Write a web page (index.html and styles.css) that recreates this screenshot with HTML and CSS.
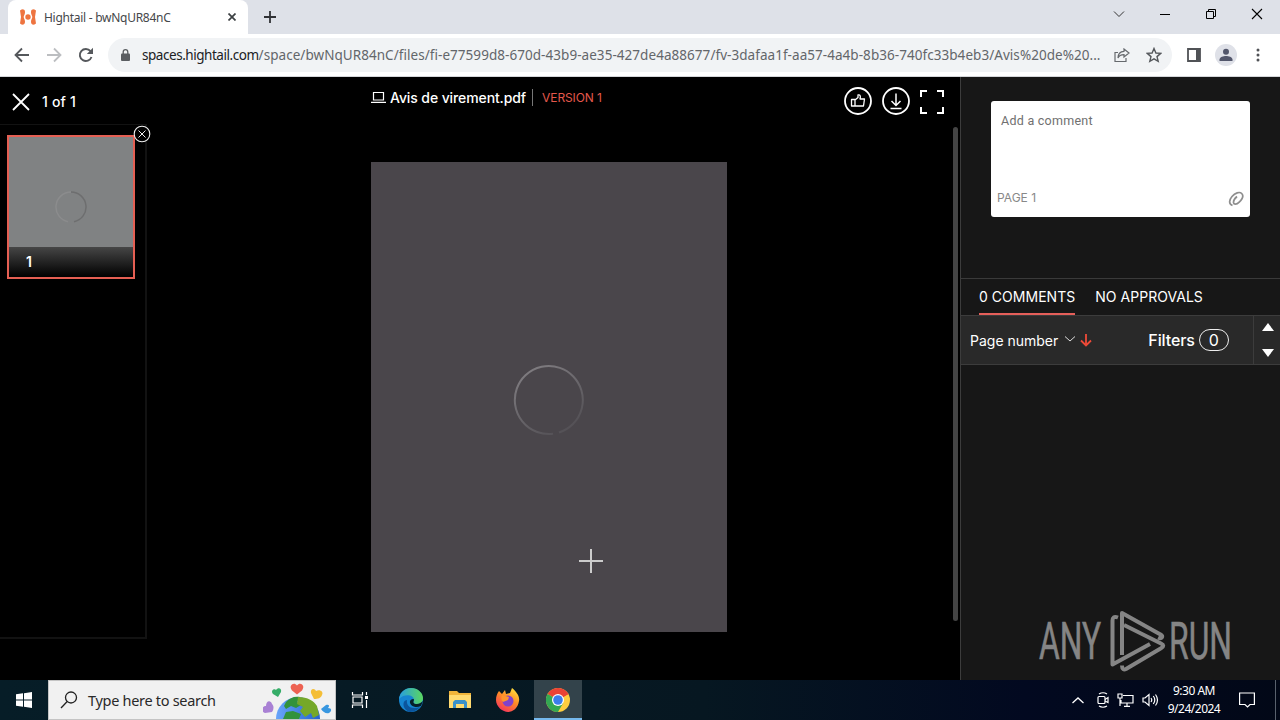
FILE: index.html
```html
<!DOCTYPE html>
<html lang="en">
<head>
    <meta charset="UTF-8">
    <meta name="viewport" content="width=device-width, initial-scale=1.0">
    <title>Hightail - bwNqUR84nC</title>
    <link rel="stylesheet" href="styles.css">
</head>
<body>
    <div class="desktop">
        <!-- Browser tabs -->
        <div class="tabstrip">
            <div class="tab">
                <svg class="favicon" width="16" height="16" viewBox="0 0 16 16" fill="#ee7440">
                    <path d="M0 1.500 2 .3C4.600.3 5 1.500 5 3.500 5 5.500 3.700 6.500 3.700 8S5 10.500 5 12.500 4.600 15.700 2 15.700L0 14.500 1 8z"/>
                    <path d="M16 1.500 14 .3C11.400.3 11 1.500 11 3.500 11 5.500 12.300 6.500 12.300 8S11 10.500 11 12.500 11.400 15.700 14 15.700L16 14.500 15 8z"/>
                    <circle cx="8" cy="8" r="2.700"/>
                </svg>
                <span class="tab-title">Hightail - bwNqUR84nC</span>
                <svg width="8" height="8" viewBox="0 0 8 8" stroke="#3c4043" stroke-width="1.700"><path d="M.5.5l7 7M7.500.5l-7 7"/></svg>
            </div>
            <svg class="new-tab" width="12" height="12" viewBox="0 0 12 12" stroke="#303236" stroke-width="1.800"><path d="M6 0v12M0 6h12"/></svg>
            <div class="window-buttons">
                <svg width="12" height="12" viewBox="0 0 12 12" fill="none" stroke="#333"><path d="M1 3.500l5 5 5-5"/></svg>
                <svg width="12" height="12" viewBox="0 0 12 12" fill="none" stroke="#000"><path d="M1 6.500h10"/></svg>
                <svg width="12" height="12" viewBox="0 0 12 12" fill="none" stroke="#000"><path d="M1.500 3.500h7v7h-7zM3.500 3.500v-2h7v7h-2"/></svg>
                <svg width="12" height="12" viewBox="0 0 12 12" fill="none" stroke="#000" stroke-width="1.100"><path d="M1 1l10 10M11 1L1 11"/></svg>
            </div>
        </div>

        <!-- Address bar -->
        <div class="toolbar">
            <div class="nav-buttons">
                <svg width="16" height="16" viewBox="0 0 16 16" fill="none" stroke="#55585c" stroke-width="1.800"><path d="M15 8H2M8 1.500L1.500 8 8 14.500"/></svg>
                <svg width="16" height="16" viewBox="0 0 16 16" fill="none" stroke="#bcbec1" stroke-width="1.800"><path d="M1 8h13M8 1.500L14.500 8 8 14.500"/></svg>
                <svg width="16" height="16" viewBox="0 0 16 16" fill="none" stroke="#55585c" stroke-width="1.900"><path d="M13.500 10A6 6 0 1 1 12.500 4.200"/><path d="M15 .8v6.200H8.800z" fill="#55585c" stroke="none"/></svg>
            </div>
            <div class="omnibox">
                <svg class="lock" width="9" height="12" viewBox="0 0 9 12"><rect y="4.500" width="9" height="7.500" rx="1" fill="#5a5d61"/><path d="M2.200 5V3a2.300 2.300 0 0 1 4.600 0v2" fill="none" stroke="#5a5d61" stroke-width="1.300"/></svg>
                <span class="url"><b>spaces.hightail.com</b><i>/space/bwNqUR84nC/files/fi-e77599d8-670d-43b9-ae35-427de4a88677/fv-3dafaa1f-aa57-4a4b-8b36-740fc33b4eb3/Avis%20de%20...</i></span>
                <svg class="share" width="16" height="14" viewBox="0 0 16 14" fill="none" stroke="#66696d" stroke-width="1.200"><path d="M4 4.500H1v9h11V10"/><path d="M10 1l5 4-5 4V6.700C7 6.700 5 7.500 4 10c0-4 2-6.500 6-6.700z"/></svg>
                <svg class="star" width="16" height="16" viewBox="0 0 16 16" fill="none" stroke="#55585c" stroke-width="1.400"><path d="M8 1.500l1.900 4.500 4.800.4L11 9.600l1.200 4.700L8 11.800l-4.200 2.500L5 9.600 1.300 6.400 6.100 6z"/></svg>
            </div>
            <svg class="side-icon" width="14" height="14" viewBox="0 0 14 14"><path d="M1 1h12v12H1z" fill="none" stroke="#505256" stroke-width="1.800"/><path d="M9 1h4v12H9z" fill="#505256"/></svg>
            <div class="avatar"><svg width="14" height="14" viewBox="0 0 14 14" fill="#52566b"><circle cx="7" cy="3.800" r="3"/><path d="M.5 13v-1.500C.5 9 4.500 8 7 8s6.500 1 6.500 3.500V13z"/></svg></div>
            <svg width="4" height="14" viewBox="0 0 4 14" fill="#505256"><circle cx="2" cy="2" r="1.500"/><circle cx="2" cy="7" r="1.500"/><circle cx="2" cy="12" r="1.500"/></svg>
        </div>

        <div class="app">
            <div class="viewer">
                <div class="pages-column">
                    <div class="pages-header">
                        <svg width="18" height="18" viewBox="0 0 18 18" stroke="#fff" stroke-width="1.800"><path d="M1 1l16 16M17 1L1 17"/></svg>
                        <span>1 of 1</span>
                    </div>
                    <div class="pages-panel">
                        <div class="thumb">
                            <svg class="thumb-spinner" width="32" height="32" viewBox="0 0 32 32" fill="none"><path d="M16 1a15 15 0 0 0-3 29.700" stroke="#8b8c8d" stroke-width="1.500"/><path d="M16 1a15 15 0 0 1 3 29.700" stroke="#6d6e6f" stroke-width="1.500"/></svg>
                            <div class="thumb-label">1</div>
                        </div>
                        <svg class="panel-close" width="18" height="18" viewBox="0 0 18 18" fill="none" stroke="#eee"><circle cx="9" cy="9" r="7.800" fill="#000" stroke-width="1.100"/><path d="M5.500 5.500l7 7M12.500 5.500l-7 7"/></svg>
                    </div>
                </div>
                <div class="document">
                    <div class="doc-header">
                        <svg width="15" height="11" viewBox="0 0 15 11" fill="none" stroke="#fff"><path d="M2.500.5h10v7.500h-10zM0 10.300h15" stroke-width="1.200"/></svg>
                        <span class="file-name">Avis de virement.pdf</span>
                        <span class="version">VERSION 1</span>
                        <div class="doc-actions">
                            <svg width="28" height="28" viewBox="0 0 28 28" fill="none" stroke="#fff"><circle cx="14" cy="14" r="13" stroke-width="1.800"/><path d="M7.500 12.500h3.500v6.500H7.500zM11 13l3-2.500V8c2.500-.5 2.800 1.500 2 4h4.500l-1 7H11" stroke-width="1.300" stroke-linejoin="round"/></svg>
                            <svg width="28" height="28" viewBox="0 0 28 28" fill="none" stroke="#fff"><circle cx="14" cy="14" r="13" stroke-width="1.800"/><path d="M14 6.500v12M9.500 14l4.500 4.500 4.500-4.500M8.500 21.500h11" stroke-width="1.500"/></svg>
                            <svg class="fullscreen" width="24" height="24" viewBox="0 0 24 24" fill="none" stroke="#fff" stroke-width="2"><path d="M1 7V1h6M17 1h6v6M23 17v6h-6M7 23H1v-6"/></svg>
                        </div>
                    </div>
                    <div class="page">
                        <svg class="spinner" width="72" height="72" viewBox="0 0 72 72" fill="none">
                            <defs><linearGradient id="fade" x1="0" y1="0" x2=".6" y2="1"><stop offset="0" stop-color="#858286"/><stop offset="1" stop-color="#555257"/></linearGradient></defs>
                            <path d="M46 68.500A34 34 0 1 0 40 69.800" stroke="url(#fade)" stroke-width="2"/>
                        </svg>
                    </div>
                    <svg class="crosshair" width="24" height="24" viewBox="0 0 24 24" stroke="#ccc" stroke-width="2"><path d="M12 0v24M0 12h24"/></svg>
                </div>
                <div class="scrollbar"></div>
            </div>

            <div class="sidebar">
                <div class="comment-area">
                    <div class="comment-box">
                        <span class="placeholder">Add a comment</span>
                        <div class="comment-footer">
                            <span>PAGE 1</span>
                            <svg width="16" height="16" viewBox="0 0 16 16" fill="none" stroke="#8e8e8e" stroke-width="1.700"><path d="M4.500 14.500C.5 13 1 9 4 5.500S11.500.3 13.700 2.500s.2 6-2.500 8.700-5.500 2.300-5.700.5 1.500-4.500 3.500-6.200"/></svg>
                        </div>
                    </div>
                </div>
                <div class="side-tabs">
                    <div class="side-tab active">0 COMMENTS</div>
                    <div class="side-tab">NO APPROVALS</div>
                </div>
                <div class="filter-bar">
                    <span class="sort">Page number</span>
                    <svg class="sort-caret" width="10" height="6" viewBox="0 0 10 6" fill="none" stroke="#ddd"><path d="M0 .5l5 4.500 5-4.500"/></svg>
                    <svg class="sort-arrow" width="12" height="13" viewBox="0 0 12 13" fill="none" stroke="#ee4a38" stroke-width="1.800"><path d="M6 0v11.500M1 6.500l5 5 5-5"/></svg>
                    <span class="filters">Filters</span>
                    <span class="filter-count">0</span>
                    <div class="steppers">
                        <svg width="12" height="8" viewBox="0 0 12 8" fill="#fff"><path d="M6 0l6 8H0z"/></svg>
                        <svg width="12" height="8" viewBox="0 0 12 8" fill="#fff"><path d="M6 8l6-8H0z"/></svg>
                    </div>
                </div>
                <svg class="watermark" width="210" height="66" viewBox="0 0 210 66">
                    <g class="watermark-text">
                        <text x="3" y="51" textLength="62" lengthAdjust="spacingAndGlyphs">ANY</text>
                        <text x="133" y="51" textLength="63" lengthAdjust="spacingAndGlyphs">RUN</text>
                    </g>
                    <g fill="none" stroke="#858585" stroke-width="4" stroke-linejoin="round">
                        <path d="M82 9.500c-4-1.500-5.500 0-5.500 3v44L114 36"/>
                        <path d="M86 47V5l38.500 21.500c3 2 1.500 5-2.500 3.200"/>
                        <path d="M88 17l37 18.500c3 1.500 3 3 0 4.700L90 61c-2 1-4 .5-4-3.500"/>
                    </g>
                </svg>
            </div>
        </div>

        <!-- Taskbar -->
        <div class="taskbar">
            <div class="start"><svg width="16" height="16" viewBox="0 0 16 16" fill="#fff"><path d="M0 2.300L7 1.300v6.200H0zM8 1.200L16 0v7.500H8zM0 8.500h7v6.200l-7-1zM8 8.500h8V16l-8-1.200z"/></svg></div>
            <div class="search">
                <svg width="18" height="18" viewBox="0 0 18 18" fill="none" stroke="#222" stroke-width="1.300"><circle cx="11" cy="6.500" r="5.500"/><path d="M7.200 10.500L1 17"/></svg>
                <span>Type here to search</span>
                <svg class="earth" width="72" height="38" viewBox="0 0 72 38">
                    <defs><linearGradient id="sea" x1="0" x2="1"><stop offset="0" stop-color="#69a5fa"/><stop offset="1" stop-color="#2463cf"/></linearGradient></defs>
                    <circle cx="35" cy="38" r="22" fill="url(#sea)"/>
                    <path d="M23 21c4-4 8-6 14-5l-3 5 4 3-5 3-5-2-5 3-2-3z" fill="#32923b"/>
                    <path d="M20 38l3-7 7-1 8 3-2 5z" fill="#32923b"/>
                    <path d="M35 16c10 0 16 4 19 9l2 9-6 3-2-5-6 4-5-6 3-4-6-3z" fill="#75a829"/>
                    <path d="M34 13.500l-5-4c-4-5 2-9 5-5 3-4 9 0 5 5z" fill="#ed6252"/>
                    <path d="M15 16l-5-3c-3-4 2-6 3-4 2-3 6-2 5 2z" fill="#36ad68"/>
                    <path d="M51 18l-3-6c-1-5 4-5 5-2 4-2 8 1 6 4-1 3-4 4-8 4z" fill="#f4be36"/>
                    <path d="M9 31l-7 1c-5-2-3-7 1-7 0-6 5-6 6-2 2 2 2 5 0 8z" fill="#a981d4"/>
                    <path d="M58 28l5-4c3-1 4 1 2 3 4 0 4 3 1 5-3 1-6-1-8-4z" fill="#3897e0"/>
                </svg>
            </div>
            <div class="task"><svg width="18" height="16" viewBox="0 0 18 16" fill="none" stroke="#fff" stroke-width="1.200"><path d="M1.500 0v3h10V0M1.500 16v-3h10v3M2 5h9v6H2zM15.500 0v3M15.500 8v8"/><path d="M14 4h3v3h-3z" fill="#fff" stroke="none"/></svg></div>
            <div class="task edge"><svg width="24" height="24" viewBox="0 0 24 24">
                <defs><linearGradient id="edge" x1="0" x2="1"><stop offset="0" stop-color="#279de0"/><stop offset="1" stop-color="#5bd75f"/></linearGradient></defs>
                <circle cx="12" cy="12" r="12" fill="#1685d1"/>
                <path d="M0 11C1 4 6 0 12 0c7 0 12 5 12 10 0 4-3 6-6 6-4 0-4-2-3-4C15 7 6 5 0 11z" fill="url(#edge)"/>
                <path d="M8 12c-1 6 4 10 13 7-3 4-7 5-11 5-7-3-7-12-2-12z" fill="#0b559d"/>
                <path d="M15 12c-1 2-1 4 3 4 2 0 4-1 6-3l-2 5c-6 3-12-1-11-5 1-2 4-3 4-1z" fill="#061f29"/>
            </svg></div>
            <div class="task explorer"><svg width="22" height="20" viewBox="0 0 22 20"><path d="M0 1h8l2 2h12v15H0z" fill="#f0b43a"/><path d="M0 5h22v13H0z" fill="#ffda70"/><path d="M4 18v-6l2-2h10l2 2v6h-3v-4H7v4z" fill="#3b91ca"/></svg></div>
            <div class="task firefox"><svg width="24" height="24" viewBox="0 0 24 24">
                <defs><linearGradient id="fox" x1=".8" y1="0" x2=".2" y2="1"><stop offset="0" stop-color="#ffe23d"/><stop offset=".45" stop-color="#ff8a26"/><stop offset="1" stop-color="#f42c62"/></linearGradient></defs>
                <path d="M3 3l3 3 3-4 1 4 4-1 2-5c5 4 8 9 7 13-1 7-6 11-11 11S0 19 0 12C0 8 1 6 3 3z" fill="url(#fox)"/>
                <circle cx="12" cy="13" r="5.500" fill="#8142cc"/><path d="M6 7l7 2-1 3-5 2c-2-2-2-4-1-7z" fill="#ff952c"/>
            </svg></div>
            <div class="task active"><svg width="24" height="24" viewBox="0 0 24 24"><circle cx="12" cy="12" r="12" fill="#ffcd40"/><path d="M12 12L1.600 6A12 12 0 0 1 22.400 6z" fill="#ea4335"/><path d="M12 12L1.600 6A12 12 0 0 0 12 24l5.200-9z" fill="#34a853"/><path d="M12 6h10.400L12 12z" fill="#ea4335"/><circle cx="12" cy="12" r="6" fill="#fff"/><circle cx="12" cy="12" r="4.800" fill="#3b7ded"/></svg></div>
            <div class="tray">
                <svg width="12" height="7" viewBox="0 0 12 7" fill="none" stroke="#fff" stroke-width="1.300"><path d="M.5 6L6 1l5.500 5"/></svg>
                <svg width="12" height="16" viewBox="0 0 12 16" fill="none" stroke="#fff" stroke-width="1.200"><rect x="1" y="4.500" width="7" height="7" rx="1"/><path d="M8 7.500l3-2v5L8 9M2 2q4-2.500 8 0M2 14q4 2.500 8 0"/></svg>
                <svg width="17" height="14" viewBox="0 0 17 14" fill="none" stroke="#fff" stroke-width="1.200"><path d="M6 2.500h10v7.500H4V7M10 10v3M7 13.300h6M1 1h4v4H1zM3 5v8"/></svg>
                <svg width="17" height="14" viewBox="0 0 17 14" fill="none" stroke="#fff" stroke-width="1.200"><path d="M1 5h2l4-3.500v11L3 9H1zM9 5q1.500 2 0 4M11.300 3q3 4 0 8M13.500 1.500q4 5.500 0 11"/></svg>
            </div>
            <div class="clock"><span>9:30 AM</span><span>9/24/2024</span></div>
            <svg class="notice" width="16" height="16" viewBox="0 0 16 16" fill="none" stroke="#fff" stroke-width="1.200"><path d="M.6 1h14.800v11.500H11L8.500 15 6 12.500H.6z"/></svg>
            <div class="show-desktop"></div>
        </div>
    </div>
</body>
</html>
```

FILE: styles.css
```css
* {
    box-sizing: border-box;
}
body {
    margin: 0;
    background: #000;
    font-family: Inter, sans-serif;
}
svg {
    display: block;
    flex: none;
}
.desktop {
    width: 1280px;
    height: 720px;
    display: flex;
    flex-direction: column;
    overflow: hidden;
}

/* Browser */
.tabstrip {
    height: 34px;
    display: flex;
    align-items: center;
    background: #dee1e8;
    font-family: "Noto Sans", sans-serif;
}
.tab {
    width: 240px;
    height: 34px;
    margin-left: 8px;
    padding: 0 12px;
    display: flex;
    align-items: center;
    background: #fff;
    border-radius: 8px 8px 0 0;
}
.tab-title {
    flex: 1;
    margin-left: 8px;
    font-size: 12px;
    letter-spacing: -0.27px;
    color: #45474a;
}
.new-tab {
    margin-left: 16px;
}
.window-buttons {
    margin-left: auto;
    margin-right: 17px;
    margin-bottom: 6px;
    display: flex;
    gap: 34px;
}
.toolbar {
    height: 43px;
    padding-right: 20px;
    display: flex;
    align-items: center;
    background: #fff;
    border-bottom: 1px solid #d5d7da;
}
.nav-buttons {
    display: flex;
    gap: 16px;
    margin-left: 14px;
}
.omnibox {
    width: 1064px;
    height: 34px;
    margin-left: 14px;
    padding: 0 10px 0 13px;
    display: flex;
    align-items: center;
    background: #f1f3f5;
    border-radius: 17px;
}
.url {
    width: 973px;
    margin-left: 12px;
    font-family: "Noto Sans", sans-serif;
    font-size: 13.5px;
    white-space: nowrap;
}
.url b {
    font-weight: 400;
    letter-spacing: -0.46px;
    color: #202124;
}
.url i {
    font-style: normal;
    letter-spacing: 0.05px;
    color: #63666a;
}
.share {
    margin-right: 16px;
}
.side-icon {
    margin-left: 15px;
}
.avatar {
    width: 22px;
    height: 22px;
    margin: 0 19px 0 14px;
    display: flex;
    align-items: center;
    justify-content: center;
    background: #dfe1e8;
    border-radius: 50%;
}

/* Viewer */
.app {
    height: 603px;
    display: flex;
}
.viewer {
    width: 960px;
    display: flex;
    background: #000;
    color: #fff;
}
.pages-column {
    width: 148px;
}
.pages-header {
    height: 47px;
    padding: 2px 0 0 12px;
    display: flex;
    align-items: center;
    gap: 12px;
    font-size: 14px;
    font-weight: 500;
    letter-spacing: 0.2px;
}
.pages-panel {
    position: relative;
    width: 147px;
    height: 515px;
    padding: 10px 0 0 7px;
    border: solid #121212;
    border-width: 1px 2px 2px 0;
}
.thumb {
    width: 128px;
    height: 144px;
    display: flex;
    flex-direction: column;
    align-items: center;
    background: #808283;
    border: 2px solid #e55f53;
}
.thumb-spinner {
    margin-top: 54px;
}
.thumb-label {
    width: 100%;
    height: 30px;
    margin-top: auto;
    padding-left: 17px;
    background: linear-gradient(#464646, #000);
    font-size: 14px;
    font-weight: 600;
    line-height: 30px;
}
.panel-close {
    position: absolute;
    top: -0.5px;
    right: -5.5px;
}
.document {
    position: relative;
    width: 805px;
    padding-left: 223px;
}
.doc-header {
    height: 48px;
    margin-bottom: 37px;
    display: flex;
    align-items: center;
}
.doc-header > svg,
.doc-header > span {
    margin-bottom: 7px;
}
.file-name {
    margin-left: 4px;
    padding-right: 6px;
    border-right: 1px solid #777;
    font-size: 14px;
    font-weight: 500;
    line-height: 17px;
    letter-spacing: -0.1px;
}
.version {
    margin-left: 9px;
    font-size: 12px;
    letter-spacing: -0.1px;
    color: #e3584c;
}
.doc-actions {
    display: flex;
    align-items: center;
    gap: 10px;
    margin: 0 9px 0 auto;
}
.fullscreen {
    margin-top: 2px;
}
.page {
    width: 356px;
    height: 470px;
    display: flex;
    align-items: center;
    justify-content: center;
    background: #4a464b;
}
.spinner {
    margin-top: 5px;
}
.crosshair {
    position: absolute;
    left: 431px;
    top: 472px;
}
.scrollbar {
    width: 5px;
    height: 494px;
    margin-top: 50px;
    background: #444;
    border-radius: 3px;
}

/* Comments */
.sidebar {
    position: relative;
    width: 320px;
    background: #171717;
    border-left: 1px solid #3c3c3c;
    color: #fff;
}
.comment-area {
    height: 202px;
    padding: 24px 30px;
    border-bottom: 1px solid #3a3a3a;
}
.comment-box {
    width: 259px;
    height: 116px;
    padding: 12px 6px 10px;
    display: flex;
    flex-direction: column;
    justify-content: space-between;
    background: #fff;
    border-radius: 3px;
}
.placeholder {
    margin-left: 4px;
    font-family: Roboto, sans-serif;
    font-size: 12.5px;
    letter-spacing: 0.26px;
    color: #707070;
}
.comment-footer {
    display: flex;
    align-items: center;
    justify-content: space-between;
    font-size: 12px;
    color: #888;
}
.comment-footer span {
    margin-bottom: 2px;
}
.side-tabs {
    height: 36px;
    padding-left: 18px;
    display: flex;
    gap: 20px;
    font-size: 14px;
    line-height: 36px;
}
.side-tab {
    height: 36px;
    letter-spacing: 0.03px;
    white-space: nowrap;
}
.side-tab.active {
    border-bottom: 2px solid #e55f5a;
}
.filter-bar {
    height: 50px;
    padding-left: 9px;
    display: flex;
    align-items: center;
    background: #292929;
    border: solid #3c3c3c;
    border-width: 1px 0;
}
.sort {
    font-size: 14px;
}
.sort-caret {
    margin: 0 5px 2px 7px;
}
.sort-arrow {
    margin-right: 56px;
}
.filters {
    font-size: 16px;
    font-weight: 500;
    letter-spacing: -0.1px;
}
.filter-count {
    width: 30px;
    height: 22px;
    margin-left: 4px;
    border: 1px solid #eee;
    border-radius: 11px;
    font-size: 16px;
    line-height: 20px;
    text-align: center;
}
.steppers {
    width: 27px;
    height: 48px;
    margin-left: auto;
    display: flex;
    flex-direction: column;
    align-items: center;
    justify-content: center;
    gap: 18px;
    padding-left: 1px;
    border-left: 1px solid #3c3c3c;
}
.watermark {
    position: absolute;
    right: 34px;
    bottom: 6px;
    overflow: visible;
}
.watermark-text {
    fill: #858585;
    stroke: #858585;
    stroke-width: 0.6px;
    font-family: Roboto, sans-serif;
    font-size: 52px;
}

/* Taskbar */
.taskbar {
    height: 40px;
    display: flex;
    align-items: center;
    background: linear-gradient(90deg, #061d27, #061721 55%, #020920 80%, #020817);
    color: #fff;
    font-family: "Noto Sans", sans-serif;
}
.start,
.task {
    width: 48px;
    height: 40px;
    display: flex;
    align-items: center;
    justify-content: center;
}
.search {
    width: 288px;
    height: 40px;
    padding-left: 11px;
    display: flex;
    align-items: center;
    gap: 10px;
    background: #f1f1f1;
    border: 1px solid #c4c4c4;
    color: #292929;
    font-size: 14.5px;
    letter-spacing: -0.3px;
}
.earth {
    margin-left: auto;
}
.task.edge {
    width: 54px;
}
.task.explorer {
    width: 44px;
}
.task.firefox {
    width: 52px;
}
.task.active {
    background: #33434b;
    border-bottom: 2px solid #76b9ed;
}
.task.active svg {
    margin-top: 2px;
}
.tray {
    display: flex;
    align-items: center;
    gap: 8px;
    margin-left: auto;
}
.tray svg:first-child {
    margin-right: 5px;
}
.clock {
    width: 70px;
    display: flex;
    flex-direction: column;
    align-items: center;
    font-size: 12px;
    line-height: 18px;
    letter-spacing: -0.5px;
}
.notice {
    margin: 0 16px 0 10px;
}
.show-desktop {
    width: 5px;
    height: 40px;
    margin-left: 4px;
    border-left: 1px solid #59616d;
}
```
